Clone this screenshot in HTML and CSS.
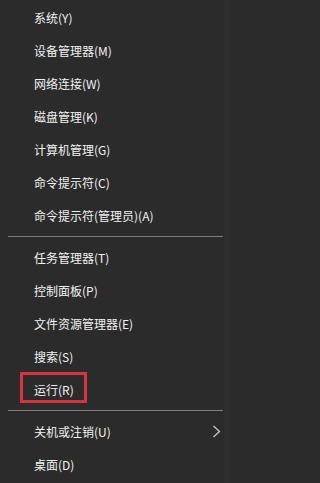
FILE: index.html
```html
<!DOCTYPE html>
<html lang="zh-CN">
<head>
<meta charset="utf-8">
<link rel="stylesheet" href="styles.css">
</head>
<body>
<div class="menu">
  <div class="group">
    <div class="item">系统(Y)</div>
    <div class="item">设备管理器(M)</div>
    <div class="item">网络连接(W)</div>
    <div class="item">磁盘管理(K)</div>
    <div class="item">计算机管理(G)</div>
    <div class="item">命令提示符(C)</div>
    <div class="item">命令提示符(管理员)(A)</div>
  </div>
  <div class="sep"><span class="line"></span></div>
  <div class="group">
    <div class="item">任务管理器(T)</div>
    <div class="item">控制面板(P)</div>
    <div class="item">文件资源管理器(E)</div>
    <div class="item">搜索(S)</div>
    <div class="item marked">运行(R)</div>
  </div>
  <div class="sep"><span class="line"></span></div>
  <div class="group">
    <div class="item">关机或注销(U)<svg class="chev" width="9" height="13" viewBox="0 0 9 13"><polyline points="1.5,1 7.5,6.5 1.5,12" fill="none" stroke="#c8c8c8" stroke-width="1.3"/></svg></div>
    <div class="item">桌面(D)</div>
  </div>
</div>
</body>
</html>
```

FILE: styles.css
```css
html, body {
  margin: 0;
  padding: 0;
  background: #2b2b2b;
}
body {
  width: 231px;
  height: 483px;
  overflow: hidden;
  font-family: "Noto Sans CJK SC", "Noto Sans", sans-serif;
  font-size: 12px;
  color: #f2f2f2;
}
.menu {
  display: flex;
  flex-direction: column;
  padding-top: 0.5px;
  border-right: 7px solid #2e2e2e;
  height: 483px;
  box-sizing: border-box;
}
.group {
  display: flex;
  flex-direction: column;
}
.item {
  height: 33px;
  line-height: 33px;
  padding-left: 34px;
  padding-right: 3px;
  display: flex;
  align-items: center;
  position: relative;
  white-space: nowrap;
}
.chev {
  margin-left: auto;
}
.sep {
  height: 9px;
  display: flex;
  align-items: center;
  padding: 0 1px 0 8px;
}
.line {
  flex: 1;
  height: 1px;
  background: #7e7e7e;
}
.marked::after {
  content: "";
  position: absolute;
  left: 20px;
  top: -1px;
  width: 67px;
  height: 31px;
  box-sizing: border-box;
  border: 3px solid #d8323c;
}
```
